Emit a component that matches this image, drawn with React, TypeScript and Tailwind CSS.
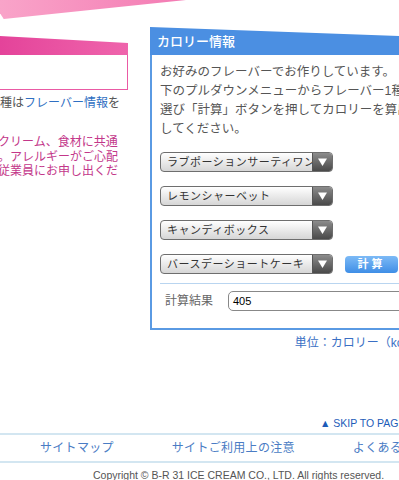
import React from 'react';

const flavors = [
  'ラブポーションサーティワン',
  'レモンシャーベット',
  'キャンディボックス',
  'バースデーショートケーキ',
];

const footerLinks = ['サイトマップ', 'サイトご利用上の注意', 'よくあるご質問'];

function FlavorSelect({ label }: { label: string }) {
  return (
    <div className="flex h-[20px] w-[173px] shrink-0 overflow-hidden rounded-[4px] border border-[#6e6e6e] bg-gradient-to-b from-white to-[#d6d6d6]">
      <span className="flex-1 overflow-hidden whitespace-nowrap pl-[6px] text-[11px] leading-[18px] tracking-[0.5px] text-[#333]">
        {label}
      </span>
      <span className="flex w-[20px] items-center justify-center border-l border-[#555] bg-gradient-to-b from-[#8c8c8c] to-[#4a4a4a]">
        <svg width="9" height="8" viewBox="0 0 9 8">
          <path d="M0 0.5h9L4.5 8z" fill="#fff" />
        </svg>
      </span>
    </div>
  );
}

export default function App() {
  return (
    <div className="relative h-[480px] w-[399px] overflow-hidden bg-white font-['Liberation_Sans','Noto_Sans_CJK_JP',sans-serif]">
      {/* pink banner edge at top */}
      <div className="absolute left-0 top-0 h-[19px] w-[186px] bg-gradient-to-r from-[#f9a4c9] to-[#f37ab3] [clip-path:polygon(0_0,100%_0,2%_100%,0_70%)]" />

      <div className="flex items-start">
        {/* left column (cut by the viewport) */}
        <div className="mt-[36px] w-[128px] shrink-0 overflow-hidden">
          <div className="h-[19px] bg-gradient-to-r from-[#e4439a] to-[#ef64ac] [clip-path:polygon(0_0,100%_7px,100%_100%,0_100%)]" />
          <div className="h-[35px] border-b-[1.5px] border-r-[1.5px] border-[#ea5aa4] bg-white" />
          <p className="mt-[4px] whitespace-nowrap text-[12px] leading-[19px] text-[#555]">
            種は<span className="text-[#2f6fc2]">フレーバー情報</span>を
          </p>
          <p className="-ml-[2px] mt-[22px] whitespace-nowrap text-[12px] leading-[14.5px] text-[#c3378a]">
            クリーム、食材に共通
            <br />
            。アレルギーがご心配
            <br />
            従業員にお申し出くだ
          </p>
        </div>

        {/* calorie panel */}
        <div className="ml-[22px] mt-[27px] w-[278px] shrink-0">
          <div className="flex h-[28px] items-end bg-[#4b8fe2] pb-[4px] pl-[7px] [clip-path:polygon(0_0,100%_10px,100%_100%,0_100%)]">
            <span className="text-[13px] font-medium leading-[18px] text-white">カロリー情報</span>
          </div>
          <div className="border-x-2 border-b-2 border-[#5a9ae3] bg-white pb-[17px] pl-[8px]">
            <p className="whitespace-nowrap pt-[8px] text-[12.5px] leading-[19px] text-[#555]">
              お好みのフレーバーでお作りしています。
              <br />
              下のプルダウンメニューからフレーバー1種を
              <br />
              選び「計算」ボタンを押してカロリーを算出
              <br />
              してください。
            </p>
            <div className="mt-[13px] flex flex-col gap-[14px]">
              {flavors.map((f, i) => (
                <div key={f} className="flex items-center gap-[12px]">
                  <FlavorSelect label={f} />
                  {i === flavors.length - 1 && (
                    <button
                      type="button"
                      className="h-[17px] w-[53px] rounded-[4px] bg-gradient-to-b from-[#7cbaf6] to-[#3e8ee6] text-[11px] font-bold leading-[17px] tracking-[3px] text-white"
                    >
                      計算
                    </button>
                  )}
                </div>
              ))}
            </div>
            <div className="mt-[9px] h-px bg-[#b9d5f0]" />
            <div className="mt-[7px] flex items-center">
              <span className="ml-[5px] w-[63px] text-[12px] text-[#666]">計算結果</span>
              <div className="h-[20px] flex-1 rounded-[5px] border border-[#888] bg-white pl-[4px] text-[11px] leading-[18px] text-black">
                405
              </div>
            </div>
          </div>
          <p className="mr-[4px] mt-[5px] whitespace-nowrap text-right text-[12px] leading-[16px] text-[#3a6fc4]">
            単位：カロリー（kcal）
          </p>
        </div>
      </div>

      {/* footer */}
      <footer className="mt-[65px] w-[470px]">
        <div className="whitespace-nowrap pl-[320px] text-[10.5px] leading-[14px] text-[#1d5cb8]">
          ▲ SKIP TO PAGE TOP
        </div>
        <div className="mt-[3px] border-y-2 border-[#d3e6f1]">
          <ul className="flex h-[26px] items-center gap-[58px] pl-[40px] text-[12px] tracking-[0.3px] text-[#4a7cc4]">
            {footerLinks.map((l) => (
              <li key={l} className="whitespace-nowrap">
                {l}
              </li>
            ))}
          </ul>
        </div>
        <p className="mt-[6px] whitespace-nowrap pl-[93px] text-[10.5px] leading-[13px] text-[#555]">
          Copyright © B-R 31 ICE CREAM CO., LTD. All rights reserved.
        </p>
      </footer>
    </div>
  );
}
